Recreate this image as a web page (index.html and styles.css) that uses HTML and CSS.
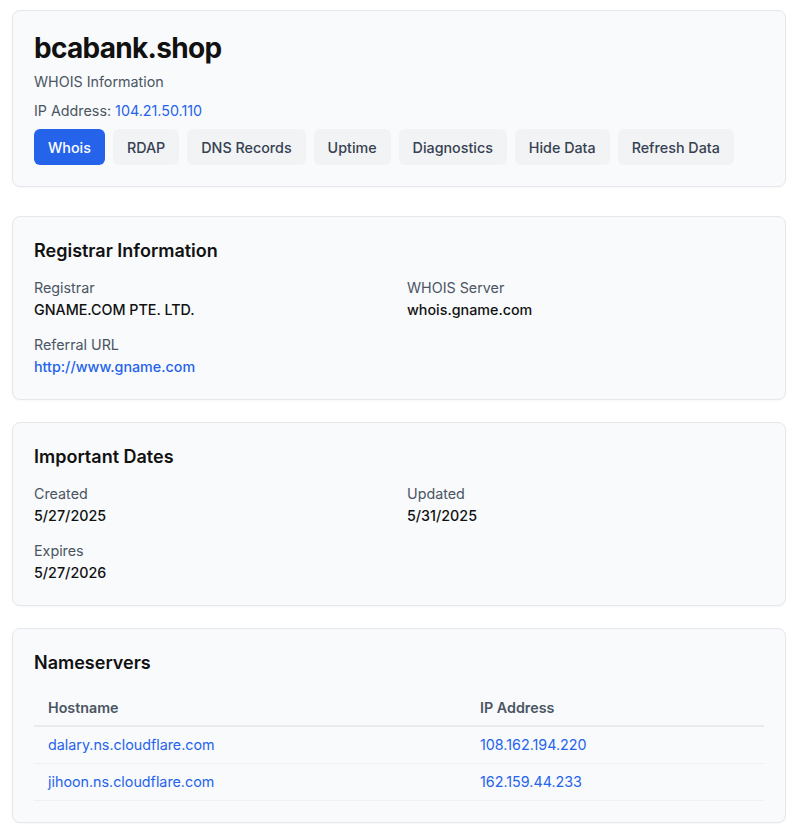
FILE: index.html
```html
<!DOCTYPE html>
<html lang="en">
<head>
  <meta charset="UTF-8">
  <title>bcabank.shop - WHOIS</title>
  <link rel="stylesheet" href="styles.css">
</head>
<body>
  <!-- header card -->
  <div class="card head-card">
    <h1 class="domain">bcabank.shop</h1>
    <div class="subtitle">WHOIS Information</div>
    <div class="ip-line">IP Address: <a href="#" class="link">104.21.50.110</a></div>
    <div class="tabs">
      <button class="tab active">Whois</button>
      <button class="tab">RDAP</button>
      <button class="tab">DNS Records</button>
      <button class="tab">Uptime</button>
      <button class="tab">Diagnostics</button>
      <button class="tab">Hide Data</button>
      <button class="tab">Refresh Data</button>
    </div>
  </div>

  <div class="card">
    <h2 class="card-title">Registrar Information</h2>
    <div class="info-grid">
      <div class="info-item">
        <div class="label">Registrar</div>
        <div class="value">GNAME.COM PTE. LTD.</div>
      </div>
      <div class="info-item">
        <div class="label">WHOIS Server</div>
        <div class="value">whois.gname.com</div>
      </div>
      <div class="info-item">
        <div class="label">Referral URL</div>
        <div class="value"><a href="#" class="link">http://www.gname.com</a></div>
      </div>
    </div>
  </div>

  <div class="card">
    <h2 class="card-title">Important Dates</h2>
    <div class="info-grid">
      <div class="info-item">
        <div class="label">Created</div>
        <div class="value">5/27/2025</div>
      </div>
      <div class="info-item">
        <div class="label">Updated</div>
        <div class="value">5/31/2025</div>
      </div>
      <div class="info-item">
        <div class="label">Expires</div>
        <div class="value">5/27/2026</div>
      </div>
    </div>
  </div>

  <div class="card ns-card">
    <h2 class="card-title">Nameservers</h2>
    <table class="ns-table">
      <thead>
        <tr><th class="col-host">Hostname</th><th>IP Address</th></tr>
      </thead>
      <tbody>
        <tr>
          <td><a href="#" class="link">dalary.ns.cloudflare.com</a></td>
          <td><a href="#" class="link">108.162.194.220</a></td>
        </tr>
        <tr>
          <td><a href="#" class="link">jihoon.ns.cloudflare.com</a></td>
          <td><a href="#" class="link">162.159.44.233</a></td>
        </tr>
      </tbody>
    </table>
  </div>
</body>
</html>
```

FILE: styles.css
```css
* {
  box-sizing: border-box;
}

body {
  margin: 0;
  padding: 10px 14px 10px 12px;
  font-family: Inter, "Noto Sans", sans-serif;
  background-color: #ffffff;
  color: #111827;
  font-size: 14.3px;
}

.card {
  background-color: #f8fafc;
  border: 1px solid #e5e7eb;
  border-radius: 8px;
  padding: 20px 21px 22px;
  margin-bottom: 22px;
  box-shadow: 0 1px 2px rgba(0, 0, 0, 0.03);
}

.head-card {
  padding-bottom: 21px;
  margin-bottom: 29px;
}

.ns-card {
  padding-bottom: 21px;
}

.domain {
  margin: 0;
  font-size: 28px;
  line-height: 34px;
  font-weight: 700;
  letter-spacing: -0.025em;
  color: #111;
}

.subtitle {
  margin-top: 7px;
  line-height: 20px;
  color: #4b5563;
}

.ip-line {
  margin-top: 9px;
  line-height: 20px;
  color: #4b5563;
}

.link {
  color: #2563eb;
  text-decoration: none;
}

.tabs {
  display: flex;
  gap: 8px;
  margin-top: 8px;
}

.tab {
  font-family: inherit;
  font-size: 14.3px;
  font-weight: 500;
  height: 36px;
  padding: 0 14px;
  border: none;
  border-radius: 6px;
  background-color: #f1f3f5;
  color: #374151;
  cursor: pointer;
}

.tab.active {
  background-color: #2563eb;
  color: #fff;
}

.card-title {
  margin: 2px 0 0;
  font-size: 18px;
  line-height: 24px;
  font-weight: 600;
  color: #111;
}

.info-grid {
  display: grid;
  grid-template-columns: 1fr 1fr;
  column-gap: 16px;
  row-gap: 15px;
  margin-top: 15px;
}

.label {
  line-height: 20px;
  color: #4b5563;
}

.value {
  margin-top: 2px;
  line-height: 20px;
  font-weight: 500;
  color: #111;
}

.ns-table {
  width: 100%;
  margin-top: 12px;
  border-collapse: collapse;
}

.ns-table th {
  text-align: left;
  font-weight: 600;
  color: #4b5563;
  padding: 11px 14px 7px;
  line-height: 20px;
  border-bottom: 2px solid #e8eaee;
}

.ns-table .col-host {
  width: 432px;
}

.ns-table td {
  padding: 8px 14px;
  line-height: 20px;
  border-bottom: 1px solid #eef0f3;
}
```
